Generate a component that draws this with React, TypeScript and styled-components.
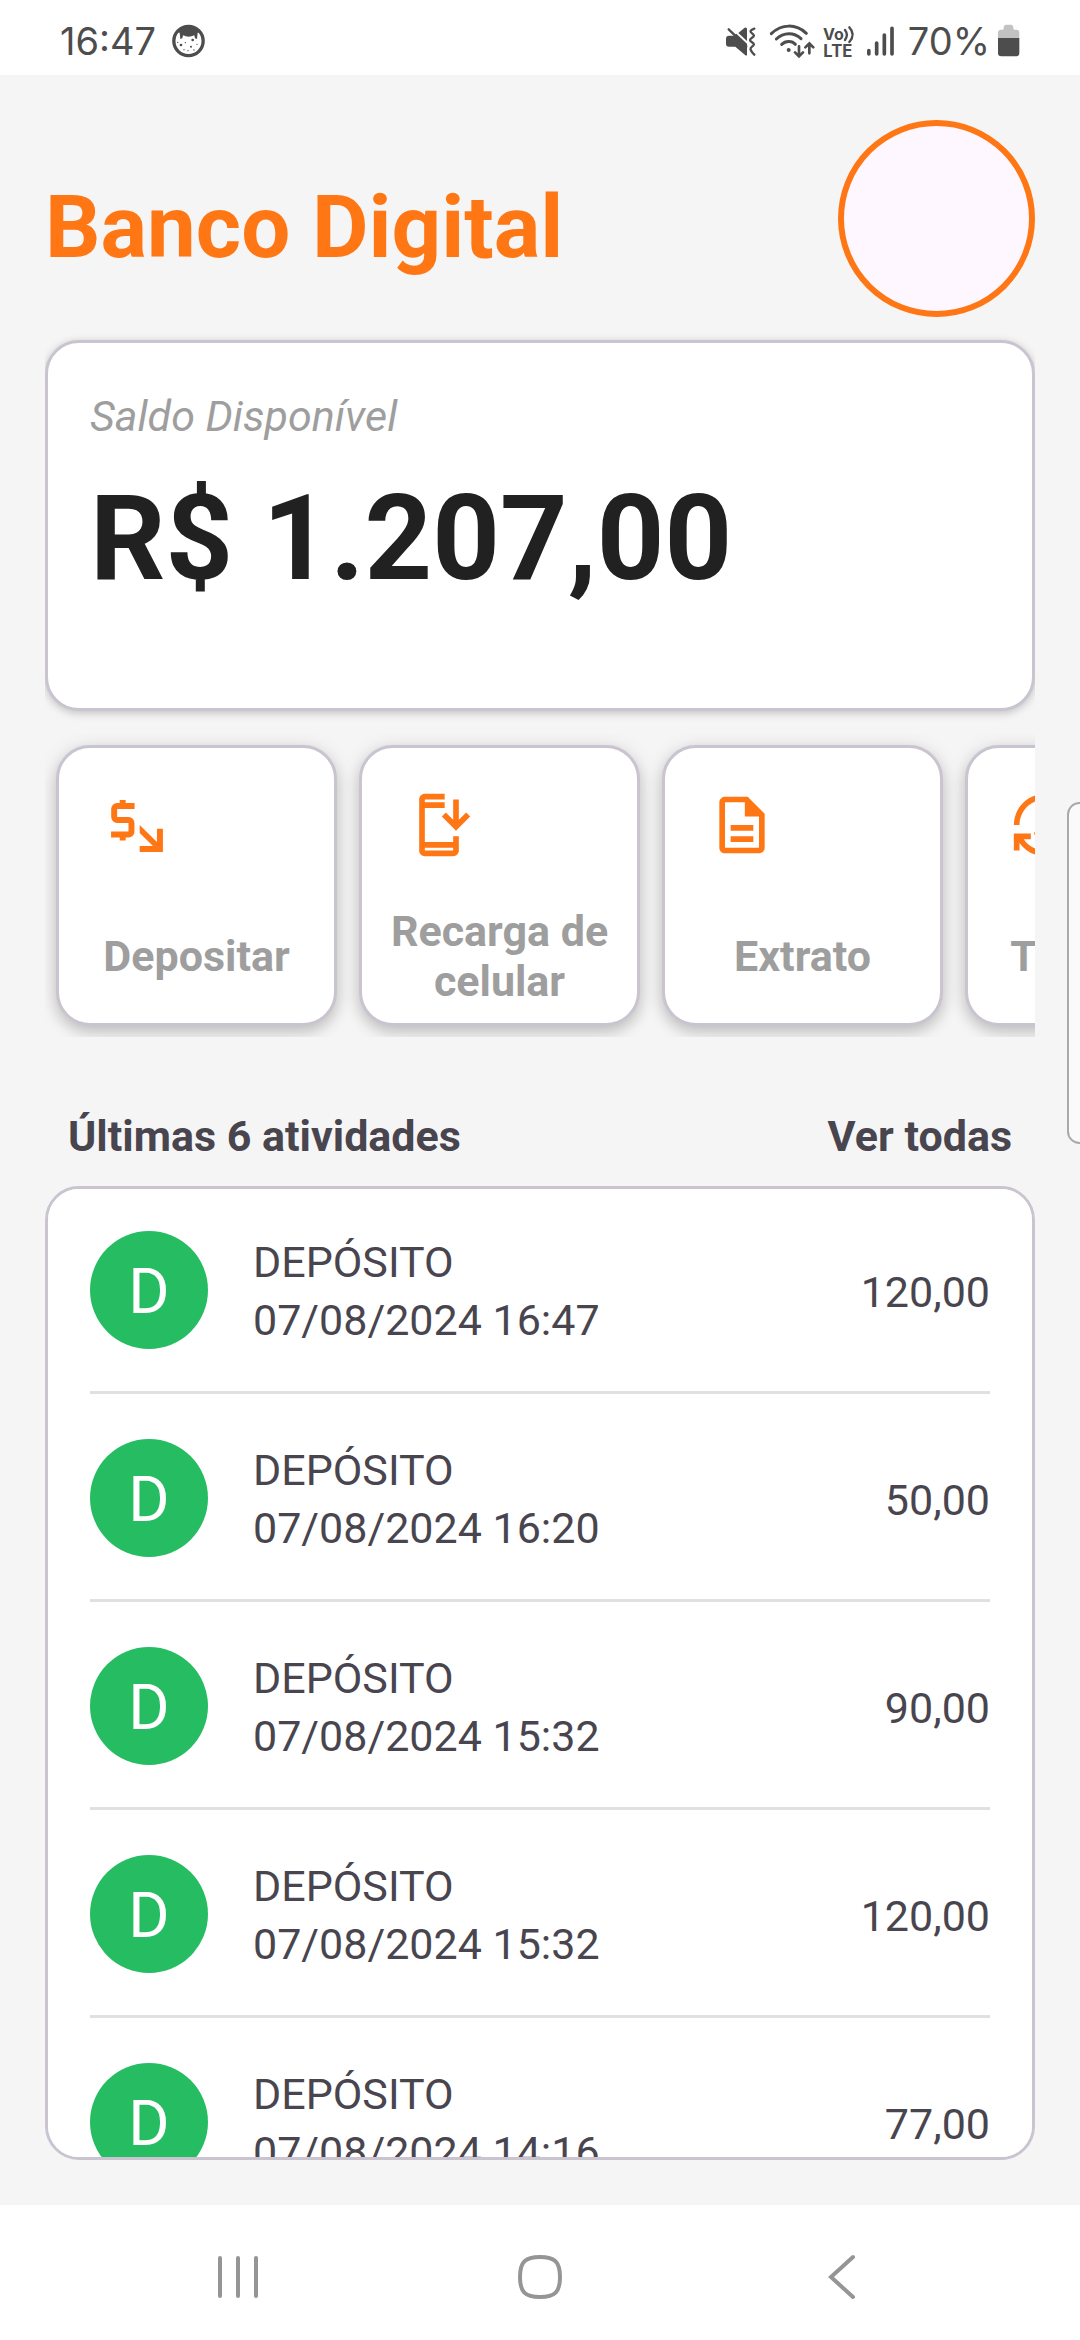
import React from "react";
import styled, { createGlobalStyle } from "styled-components";

const color = {
  orange: "#ff7715",
  page: "#f5f5f5",
  outline: "#cac4d0",
  text: "#49454f",
  muted: "#9e9e9e",
  strong: "#212121",
  green: "#26bd62",
  divider: "#e0e0e0",
  system: "#4d4d4d",
  nav: "#959595",
};

const GlobalStyle = createGlobalStyle`
  *, *::before, *::after { box-sizing: border-box; }
  body { margin: 0; background: ${color.page}; }
  h1, h2, p, ul { margin: 0; padding: 0; }
  button { margin: 0; padding: 0; border: 0; background: none; font: inherit; color: inherit; cursor: pointer; }
`;

const Screen = styled.div`
  position: relative;
  display: flex;
  flex-direction: column;
  height: 100vh;
  overflow: hidden;
  font-family: Roboto, "Noto Sans", sans-serif;
  font-size: 43px;
  color: ${color.text};
`;

/* ---------- system bars ---------- */

const StatusBar = styled.header`
  flex: none;
  display: flex;
  align-items: center;
  justify-content: space-between;
  height: 75px;
  padding: 6px 60px 0;
  background: #fff;
  color: ${color.system};
  font-family: Inter, Roboto, sans-serif;
  font-size: 38px;
  line-height: 40px;
`;

const StatusGroup = styled.div<{ $gap: number }>`
  display: flex;
  align-items: center;
  gap: ${(p) => p.$gap}px;
`;

const StatusIcon = styled.svg`
  flex: none;
  display: block;
  height: 34px;
  overflow: visible;
`;

const NavBar = styled.nav`
  flex: none;
  display: flex;
  height: 135px;
  padding: 8px 8% 0;
  background: #fff;
`;

const NavButton = styled.button`
  flex: 1;
  display: flex;
  align-items: center;
  justify-content: center;
`;

const EdgeHandle = styled.div`
  position: absolute;
  top: 802px;
  right: -12px;
  width: 25px;
  height: 342px;
  border: 2px solid #a9a9a9;
  border-radius: 14px;
  background: #fafafa;
`;

/* ---------- app ---------- */

const Main = styled.main`
  flex: 1;
  min-height: 0;
  display: flex;
  flex-direction: column;
  gap: 23px;
  padding: 45px;
  background: ${color.page};
`;

const TitleRow = styled.div`
  display: flex;
  align-items: center;
  justify-content: space-between;
`;

const Title = styled.h1`
  padding-top: 16px;
  color: ${color.orange};
  font-size: 87px;
  font-weight: 700;
  line-height: 102px;
`;

const ProfileButton = styled.button`
  width: 197px;
  height: 197px;
  border: 6px solid ${color.orange};
  border-radius: 50%;
  background: #fef7ff;
`;

const Card = styled.section`
  border: 3px solid ${color.outline};
  border-radius: 34px;
  background: #fff;
`;

const BalanceCard = styled(Card)`
  padding: 45px 42px 100px;
  box-shadow: 0 2px 8px rgba(0, 0, 0, 0.22);
  clip-path: inset(-20px 0);
`;

const BalanceLabel = styled.p`
  color: ${color.muted};
  font-style: italic;
  line-height: 56px;
`;

const BalanceValue = styled.p`
  margin-top: 26px;
  color: ${color.strong};
  font-size: 118px;
  font-weight: 700;
  line-height: 138px;
`;

const ActionScroller = styled.div`
  flex: none;
  display: flex;
  gap: 22px;
  padding: 11px;
  overflow-x: auto;
  scrollbar-width: none;
`;

const ActionCard = styled.button`
  flex: none;
  display: flex;
  flex-direction: column;
  gap: 29px;
  width: 281px;
  height: 281px;
  padding: 43px 6px 0;
  border: 3px solid ${color.outline};
  border-radius: 34px;
  background: #fff;
  box-shadow: 0 6px 14px rgba(0, 0, 0, 0.18), 0 2px 22px rgba(0, 0, 0, 0.08);
`;

const ActionIcon = styled.svg`
  flex: none;
  display: block;
  width: 68px;
  height: 68px;
  margin-left: 37px;
  fill: ${color.orange};
`;

const ActionLabel = styled.span`
  flex: 1;
  display: flex;
  align-items: center;
  justify-content: center;
  color: ${color.muted};
  font-weight: 700;
  line-height: 50px;
  text-align: center;
`;

const SectionHead = styled.div`
  display: flex;
  justify-content: space-between;
  padding: 49px 23px 0;
  font-weight: 700;
  line-height: 54px;
`;

const SectionTitle = styled.h2`
  font-size: inherit;
  font-weight: inherit;
`;

const ActivityCard = styled(Card)`
  flex: 1;
  min-height: 0;
  padding: 42px;
  overflow-y: auto;
  scrollbar-width: none;
`;

const ActivityList = styled.ul`
  display: flex;
  flex-direction: column;
  gap: 45px;
  list-style: none;
`;

const ActivityRow = styled.li`
  display: flex;
  gap: 45px;
  padding-bottom: 38px;
  border-bottom: 3px solid ${color.divider};
  line-height: 58px;
`;

const Initial = styled.span`
  flex: none;
  width: 118px;
  height: 118px;
  border-radius: 50%;
  background: ${color.green};
  color: #fff;
  font-size: 63px;
  line-height: 122px;
  text-align: center;
`;

const ActivityText = styled.div`
  flex: 1;
  padding-top: 2px;
`;

const Amount = styled.span`
  line-height: 122px;
`;

const actions = [
  {
    label: "Depositar",
    icon: (
      <>
        <path
          d="M11.5 5.3H5.3a1 1 0 0 0-1 1V9.2a1 1 0 0 0 1 1H9.4a1 1 0 0 1 1 1v3.15a1 1 0 0 1-1 1H3.2M7.3 3.2v2M7.3 15.5v2"
          fill="none"
          stroke={color.orange}
          strokeWidth="2.1"
        />
        <path d="M13.3 12 19.4 18V13.3h2.1v8.2h-8.2v-2.1H18L13.3 14.8z" />
      </>
    ),
  },
  {
    label: "Recarga de celular",
    icon: (
      <path d="M17 18H7V6h7V4H7V3h7V1H7C5.9 1 5 1.9 5 3v18c0 1.1.9 2 2 2h10c1.1 0 2-.9 2-2v-5h-2v2zm0 3H7v-1h10v1zm1-7 5-5-1.41-1.41L19 10.17V3h-2v7.17l-2.59-2.58L13 9l5 5z" />
    ),
  },
  {
    label: "Extrato",
    icon: (
      <path d="M8 16h8v2H8zm0-4h8v2H8zm6-10H6c-1.1 0-2 .9-2 2v16c0 1.1.89 2 1.99 2H18c1.1 0 2-.9 2-2V8l-6-6zm4 18H6V4h7v5h5v11z" />
    ),
  },
  {
    label: "Transferir",
    icon: (
      <path d="M12.89 11.1c-1.78-.59-2.64-.96-2.64-1.9 0-1.02 1.11-1.39 1.81-1.39 1.31 0 1.79.99 1.9 1.34l1.58-.67c-.15-.44-.82-1.91-2.66-2.23V5h-1.75v1.26c-2.6.56-2.62 2.85-2.62 2.96 0 2.27 2.25 2.91 3.35 3.31 1.58.56 2.28 1.07 2.28 2.03 0 1.13-1.05 1.61-1.98 1.61-1.82 0-2.34-1.87-2.4-2.09l-1.66.67c.63 2.19 2.28 2.78 2.9 2.96V19h1.75v-1.24c.52-.09 3.02-.59 3.02-3.22 0-1.39-.61-2.61-3.03-3.44zM3 21H1v-6h6v2H4.520c1.61 2.41 4.36 4 7.48 4 4.97 0 9-4.03 9-9h2c0 6.08-4.92 11-11 11-3.72 0-7.01-1.85-9-4.67V21zm-2-9C1 5.92 5.92 1 12 1c3.72 0 7.01 1.85 9 4.67V3h2v6h-6V7h2.48C17.87 4.59 15.12 3 12 3c-4.97 0-9 4.03-9 9H1z" />
    ),
  },
];

const activities = [
  { kind: "DEPÓSITO", date: "07/08/2024 16:47", amount: "120,00" },
  { kind: "DEPÓSITO", date: "07/08/2024 16:20", amount: "50,00" },
  { kind: "DEPÓSITO", date: "07/08/2024 15:32", amount: "90,00" },
  { kind: "DEPÓSITO", date: "07/08/2024 15:32", amount: "120,00" },
  { kind: "DEPÓSITO", date: "07/08/2024 14:16", amount: "77,00" },
];

function FaceIcon() {
  return (
    <StatusIcon width="33" viewBox="525 70 99 102" aria-hidden="true">
      <circle cx="574.5" cy="121" r="44" fill="none" stroke={color.system} strokeWidth="10" />
      <path
        d="M538 94C556 72 593 72 611 94L602 96 600 115 594 113 592 104Q575 112 558 104L556 113 550 115 548 96Z"
        fill={color.system}
      />
      <g fill={color.system}>
        <circle cx="552" cy="133" r="4" />
        <circle cx="587" cy="118" r="4" />
        <circle cx="582" cy="138" r="3" />
        <circle cx="565" cy="126" r="2" />
        <circle cx="600" cy="131" r="2" />
        <circle cx="561" cy="147" r="2" />
        <circle cx="573" cy="150" r="2" />
        <circle cx="542" cy="125" r="2" />
        <circle cx="591" cy="148" r="2" />
      </g>
    </StatusIcon>
  );
}

function MuteIcon() {
  return (
    <StatusIcon width="36" viewBox="81 70 108 102" aria-hidden="true">
      <path d="M81 114q0-9 9-9h14l8-6 32 30v33q0 4-5 2l-30-26H90q-9 0-9-9zM118 97l19-16q7-2 7 4v36z" fill={color.system} />
      <path
        d="M89 86 142 137M166 84c-14 5-14 9-7 14s8 8 0 13-8 9 0 14 7 8 0 13-7 9 7 24"
        fill="none"
        stroke={color.system}
        strokeWidth="7"
        strokeLinecap="round"
      />
    </StatusIcon>
  );
}

function WifiIcon() {
  return (
    <StatusIcon width="45" viewBox="213 70 135 102" aria-hidden="true">
      <g fill="none" stroke={color.system} strokeWidth="9" strokeLinecap="round">
        <path d="M217 99C248 69 291 69 322 98M232 115C254 94 285 94 306 114M248 131C259 120 279 119 289 131" />
      </g>
      <circle cx="269" cy="148" r="6" fill={color.system} />
      <path
        d="M300 137v29M288 155l12 12 12-12M331 158v-29M319 140l12-12 12 12"
        fill="none"
        stroke={color.system}
        strokeWidth="8"
        strokeLinecap="round"
      />
    </StatusIcon>
  );
}

function VolteIcon() {
  return (
    <StatusIcon width="36" viewBox="372 70 108 102" role="img" aria-label="VoLTE">
      <g fill={color.system} fontFamily="Inter, sans-serif" fontWeight="700">
        <text x="372" y="117" fontSize="48">Vo</text>
        <text x="373" y="168" fontSize="50">LTE</text>
      </g>
      <path
        d="M438 88q11 14 0 30M451 80q20 21 0 44"
        fill="none"
        stroke={color.system}
        strokeWidth="7"
        strokeLinecap="round"
      />
    </StatusIcon>
  );
}

function SignalIcon() {
  return (
    <StatusIcon width="33" viewBox="504 70 99 102" aria-hidden="true">
      <path
        d="M509.500 150v10M533 127v33M556 103v57M579 83v77"
        stroke={color.system}
        strokeWidth="11"
        strokeLinecap="round"
      />
    </StatusIcon>
  );
}

function BatteryIcon() {
  return (
    <StatusIcon width="22" viewBox="894 70 66 102" aria-hidden="true">
      <path d="M894 112V96q0-9 9-9h6q2 0 2-5 0-10 9-10h12q8 0 8 10 0 5 3 5h6q9 0 9 9v16z" fill="#c2c2c2" />
      <path d="M894 112h64v45q0 10-10 10h-44q-10 0-10-10z" fill={color.system} />
    </StatusIcon>
  );
}

function NavIcon({ d }: { d: string }) {
  return (
    <svg width="48" height="48" viewBox="0 0 48 48" fill="none" stroke={color.nav} strokeWidth="4" strokeLinecap="round" aria-hidden="true">
      <path d={d} />
    </svg>
  );
}

export default function App() {
  return (
    <Screen>
      <GlobalStyle />
      <StatusBar>
        <StatusGroup $gap={16}>
          <span>16:47</span>
          <FaceIcon />
        </StatusGroup>
        <StatusGroup $gap={8}>
          <MuteIcon />
          <WifiIcon />
          <VolteIcon />
          <SignalIcon />
          <span>70%</span>
          <BatteryIcon />
        </StatusGroup>
      </StatusBar>

      <Main>
        <TitleRow>
          <Title>Banco Digital</Title>
          <ProfileButton aria-label="Perfil" />
        </TitleRow>

        <BalanceCard>
          <BalanceLabel>Saldo Disponível</BalanceLabel>
          <BalanceValue>R$ 1.207,00</BalanceValue>
        </BalanceCard>

        <ActionScroller>
          {actions.map((action) => (
            <ActionCard key={action.label}>
              <ActionIcon viewBox="0 0 24 24" aria-hidden="true">
                {action.icon}
              </ActionIcon>
              <ActionLabel>{action.label}</ActionLabel>
            </ActionCard>
          ))}
        </ActionScroller>

        <SectionHead>
          <SectionTitle>Últimas 6 atividades</SectionTitle>
          <button>Ver todas</button>
        </SectionHead>

        <ActivityCard>
          <ActivityList>
            {activities.map((item, index) => (
              <ActivityRow key={index}>
                <Initial>D</Initial>
                <ActivityText>
                  <p>{item.kind}</p>
                  <p>{item.date}</p>
                </ActivityText>
                <Amount>{item.amount}</Amount>
              </ActivityRow>
            ))}
          </ActivityList>
        </ActivityCard>
      </Main>

      <NavBar>
        <NavButton aria-label="Recentes">
          <NavIcon d="M6 5v38M24 5v38M42 5v38" />
        </NavButton>
        <NavButton aria-label="Início">
          <NavIcon d="M24 4C39 4 44 9 44 24S39 44 24 44 4 39 4 24 9 4 24 4Z" />
        </NavButton>
        <NavButton aria-label="Voltar">
          <NavIcon d="M35 4 13 24 35 44" />
        </NavButton>
      </NavBar>

      <EdgeHandle />
    </Screen>
  );
}
